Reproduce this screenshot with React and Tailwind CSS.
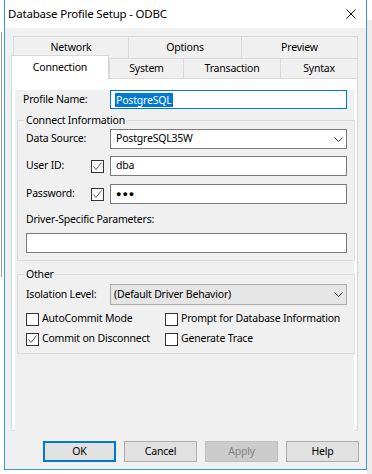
import React from "react";

const CheckBox = ({ checked }) => (
  <span className="flex h-[13px] w-[13px] shrink-0 items-center justify-center border border-[#333333] bg-white">
    {checked && (
      <svg width="11" height="11" viewBox="0 0 11 11" fill="none">
        <path d="M1.5 5.5L4 8.5L9.5 1.5" stroke="#555555" strokeWidth="1" />
      </svg>
    )}
  </span>
);

const Chevron = () => (
  <svg width="9" height="5" viewBox="0 0 9 5" fill="none">
    <path d="M0.5 0.5L4.5 4.5L8.5 0.5" stroke="#333333" strokeWidth="1" />
  </svg>
);

const Group = ({ title, className, children }) => (
  <fieldset className={`ml-[2px] w-[338px] border border-[#dcdcdc] ${className}`}>
    <legend className="ml-[6px] px-[2px] leading-[16px]">{title}</legend>
    {children}
  </fieldset>
);

const Option = ({ label, checked }) => (
  <div className="flex h-[16px] items-center gap-[3px] whitespace-nowrap">
    <CheckBox checked={checked} />
    <span>{label}</span>
  </div>
);

const Button = ({ label, className }) => (
  <button className={`flex h-[21px] w-[73px] items-center justify-center ${className}`}>
    {label}
  </button>
);

export default function App() {
  return (
    <div className="flex h-[474px] w-[372px] bg-white font-['Noto_Sans',sans-serif] text-[10.5px] tracking-[-0.2px] text-black">
      {/* window behind, left */}
      <div className="w-[4px] pt-[32px]">
        <div className="ml-[1px] h-[245px] border-l border-[#9a9a9a]" />
      </div>

      <div className="flex h-[470px] w-[363px] flex-col border-x border-b border-[#3a96dd] bg-[#f0f0f0]">
        <div className="flex h-[28px] items-center justify-between bg-white pl-[3px] pr-[10px]">
          <span className="text-[11.5px]">Database Profile Setup - ODBC</span>
          <svg width="10" height="10" viewBox="0 0 10 10" fill="none">
            <path d="M0.5 0.5L9.5 9.5M9.5 0.5L0.5 9.5" stroke="#000" strokeWidth="1" />
          </svg>
        </div>

        <div className="pl-[6px] pr-[7px] pt-[8px]">
          {/* back tab row */}
          <div className="ml-[2px] flex h-[22px]">
            <div className="flex w-[115px] items-center justify-center border-l border-t border-[#d9d9d9]">Network</div>
            <div className="flex w-[113px] items-center justify-center border-l border-t border-[#d9d9d9]">Options</div>
            <div className="flex w-[117px] items-center justify-center border-x border-t border-[#d9d9d9]">Preview</div>
          </div>
          {/* front tab row */}
          <div className="flex h-[20px] items-start">
            <div className="relative z-10 -mt-[3px] flex h-[24px] w-[98px] items-center justify-center border-x border-t border-[#d9d9d9] bg-white">
              Connection
            </div>
            <div className="flex h-[20px] w-[74px] items-center justify-center border-l border-t border-[#d9d9d9] pt-[1px]">System</div>
            <div className="flex h-[20px] w-[97px] items-center justify-center border-l border-t border-[#d9d9d9] pt-[1px]">Transaction</div>
            <div className="flex h-[20px] w-[78px] items-center justify-center border-x border-t border-[#d9d9d9] pt-[1px]">Syntax</div>
          </div>

          <div className="h-[353px] w-[347px] border border-[#d9d9d9] bg-white p-[3px]">
            <div className="h-full bg-[#f0f0f0]">
              <div className="mt-[8px] flex items-center pl-[8px]">
                <span className="w-[87px]">Profile Name:</span>
                <div className="flex h-[19px] w-[237px] items-center border border-[#0078d7] bg-white pl-[4px]">
                  <span className="bg-[#0078d7] px-[1px] leading-[14px] text-white">PostgreSQL</span>
                </div>
              </div>

              <Group title="Connect Information" className="mt-[3px]">
                <div className="mt-[1px] flex items-center pl-[8px]">
                  <span className="w-[84px]">Data Source:</span>
                  <div className="flex h-[20px] w-[237px] items-center justify-between border border-[#7a7a7a] bg-white pl-[5px] pr-[3px]">
                    <span>PostgreSQL35W</span>
                    <Chevron />
                  </div>
                </div>
                <div className="mt-[7px] flex items-center pl-[8px]">
                  <span className="w-[65px]">User ID:</span>
                  <CheckBox checked />
                  <div className="ml-[6px] flex h-[20px] w-[237px] items-center border border-[#7a7a7a] bg-white pl-[5px]">
                    dba
                  </div>
                </div>
                <div className="mt-[8px] flex items-center pl-[8px]">
                  <span className="w-[65px]">Password:</span>
                  <CheckBox checked />
                  <div className="ml-[6px] flex h-[20px] w-[237px] items-center border border-[#7a7a7a] bg-white pl-[5px]">
                    <span className="text-[9px] tracking-[1px]">●●●</span>
                  </div>
                </div>
                <div className="mt-[7px] pl-[8px] leading-[16px]">Driver-Specific Parameters:</div>
                <div className="mb-[7px] ml-[8px] mt-[6px] h-[20px] w-[321px] border border-[#7a7a7a] bg-white" />
              </Group>

              <Group title="Other" className="mt-[5px]">
                <div className="mt-[2px] flex items-center pl-[8px]">
                  <span className="w-[84px]">Isolation Level:</span>
                  <div className="flex h-[21px] w-[237px] items-center justify-between border border-[#adadad] bg-[#e5e5e5] pl-[3px] pr-[3px]">
                    <span>(Default Driver Behavior)</span>
                    <Chevron />
                  </div>
                </div>
                <div className="mt-[6px] grid grid-cols-[139px_1fr] pl-[8px]">
                  <Option label="AutoCommit Mode" />
                  <Option label="Prompt for Database Information" />
                </div>
                <div className="mb-[6px] mt-[4px] grid grid-cols-[139px_1fr] pl-[8px]">
                  <Option label="Commit on Disconnect" checked />
                  <Option label="Generate Trace" />
                </div>
              </Group>
            </div>
          </div>

          <div className="mt-[10px] flex justify-end gap-[8px]">
            <Button label="OK" className="border-2 border-[#0078d7] bg-[#e1e1e1]" />
            <Button label="Cancel" className="border border-[#adadad] bg-[#e1e1e1]" />
            <Button label="Apply" className="border border-[#bfbfbf] bg-[#cccccc] text-[#838383]" />
            <Button label="Help" className="border border-[#adadad] bg-[#e1e1e1]" />
          </div>
        </div>
      </div>

      {/* window behind, right */}
      <div className="flex w-[5px] flex-col">
        <div className="h-[20px] bg-white" />
        <div className="flex-1 bg-[#ececec]" />
      </div>
    </div>
  );
}
